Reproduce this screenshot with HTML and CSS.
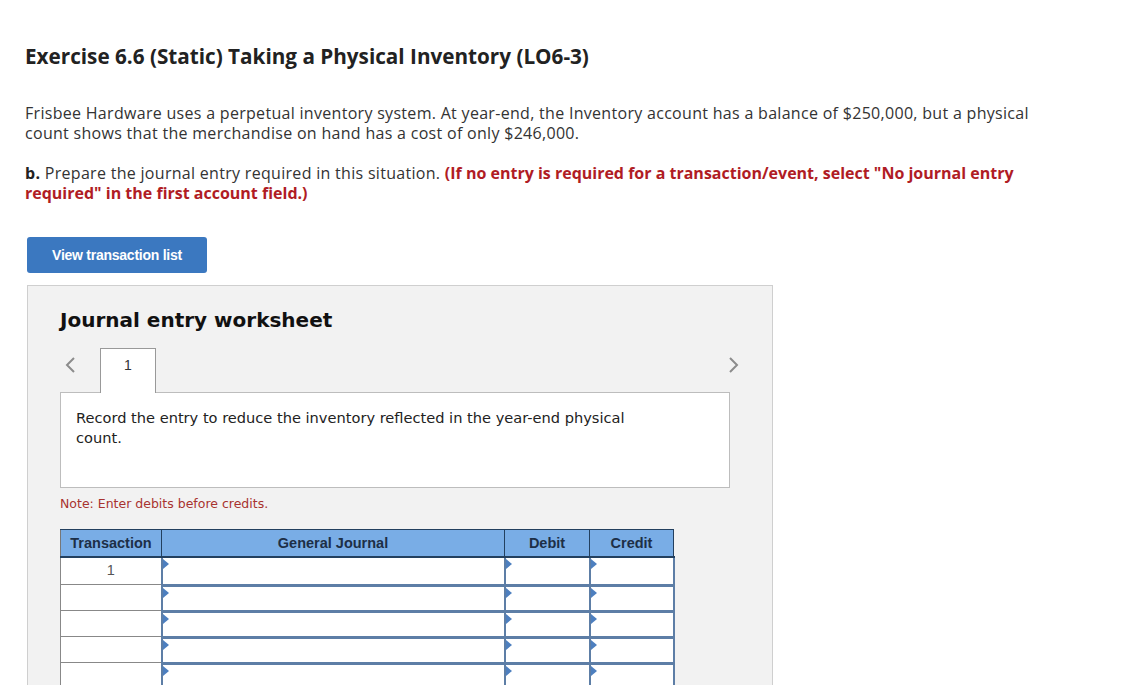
FILE: index.html
```html
<!DOCTYPE html>
<html>
<head>
<meta charset="utf-8">
<link rel="stylesheet" href="styles.css">
</head>
<body>
<div class="page">
  <h1 class="title">Exercise 6.6 (Static) Taking a Physical Inventory (LO6-3)</h1>
  <p class="intro">Frisbee Hardware uses a perpetual inventory system. At year-end, the Inventory account has a balance of $250,000, but a physical count shows that the merchandise on hand has a cost of only $246,000.</p>
  <p class="task"><b>b.</b> Prepare the journal entry required in this situation. <span class="warn">(If no entry is required for a transaction/event, select "No journal entry required" in the first account field.)</span></p>
  <button class="btn">View transaction list</button>
  <div class="panel">
    <h2 class="ws-title">Journal entry worksheet</h2>
    <div class="tabs">
      <span class="arrow">
        <svg width="12" height="18" viewBox="0 0 12 18"><path d="M10 2 L3 9 L10 16" fill="none" stroke="#8c8c8c" stroke-width="2"/></svg>
      </span>
      <div class="tab">1</div>
      <span class="spacer"></span>
      <span class="arrow right">
        <svg width="12" height="18" viewBox="0 0 12 18"><path d="M2 2 L9 9 L2 16" fill="none" stroke="#8c8c8c" stroke-width="2"/></svg>
      </span>
    </div>
    <div class="content">Record the entry to reduce the inventory reflected in the year-end physical count.</div>
    <p class="note">Note: Enter debits before credits.</p>
    <table class="journal">
      <colgroup><col class="c-tr"><col class="c-gj"><col class="c-dr"><col class="c-cr"></colgroup>
      <thead>
        <tr><th>Transaction</th><th>General Journal</th><th>Debit</th><th>Credit</th></tr>
      </thead>
      <tbody>
        <tr class="first"><td class="tr">1</td><td class="in"><div class="cell"></div></td><td class="in"><div class="cell"></div></td><td class="in"><div class="cell"></div></td></tr>
        <tr><td class="tr"></td><td class="in"><div class="cell"></div></td><td class="in"><div class="cell"></div></td><td class="in"><div class="cell"></div></td></tr>
        <tr><td class="tr"></td><td class="in"><div class="cell"></div></td><td class="in"><div class="cell"></div></td><td class="in"><div class="cell"></div></td></tr>
        <tr><td class="tr"></td><td class="in"><div class="cell"></div></td><td class="in"><div class="cell"></div></td><td class="in"><div class="cell"></div></td></tr>
        <tr><td class="tr"></td><td class="in"><div class="cell"></div></td><td class="in"><div class="cell"></div></td><td class="in"><div class="cell"></div></td></tr>
      </tbody>
    </table>
  </div>
</div>
</body>
</html>
```
FILE: styles.css
```css
html, body { margin: 0; padding: 0; background: #fff; }
body { font-family: "Open Sans", "Lato", sans-serif; color: #333; overflow: hidden; height: 685px; }
.page { padding: 0 0 0 25px; }
.title { margin: 0; padding-top: 43px; font-size: 20.7px; font-weight: 700; color: #222; line-height: 26px; }
.intro { margin: 34px 0 0; font-size: 16px; line-height: 20px; width: 1040px; color: #333; letter-spacing: 0.3px; }
.task { margin: 20px 0 0; font-size: 16px; line-height: 20px; width: 1040px; color: #333; letter-spacing: 0.3px; }
.task b { color: #222; }
.warn { color: #b01c24; font-weight: 700; letter-spacing: 0; }
.btn { display: block; margin: 34px 0 0 2px; width: 180px; height: 36px; border: 0; border-radius: 3px; background: #3b78c0; color: #fff; font-family: "Liberation Sans", Arial, sans-serif; font-weight: 700; font-size: 14px; letter-spacing: -0.25px; padding: 0; }
.panel { margin: 12px 0 0 2px; width: 712px; height: 420px; background: #f2f2f2; border: 1px solid #cfcfcf; padding: 0 0 0 32px; }
.ws-title { margin: 22px 0 0; font-family: "DejaVu Sans", Verdana, sans-serif; font-size: 20px; font-weight: 700; color: #111; line-height: 24px; }
.tabs { display: flex; align-items: stretch; margin-top: 16px; width: 680px; height: 45px; }
.arrow { width: 40px; display: flex; align-items: flex-start; padding-left: 4px; padding-top: 8px; box-sizing: border-box; }
.arrow.right { justify-content: flex-end; }
.tab { width: 56px; height: 45px; box-sizing: border-box; background: #fff; border: 1px solid #999; border-bottom: 0; font-family: "Liberation Sans", Arial, sans-serif; font-size: 14px; color: #333; text-align: center; line-height: 32px; position: relative; z-index: 1; }
.spacer { flex: 1; }
.content { width: 670px; height: 96px; box-sizing: border-box; background: #fff; border: 1px solid #bdbdbd; margin-top: -1px; padding: 15px 90px 15px 15px; font-family: "DejaVu Sans", Verdana, sans-serif; font-size: 14.6px; line-height: 20px; color: #222; }
.note { margin: 8px 0 0; font-family: "DejaVu Sans", Verdana, sans-serif; font-size: 12.5px; color: #a8332f; line-height: 16px; }
.journal { margin-top: 17px; border-collapse: collapse; table-layout: fixed; width: 613px; font-family: "Liberation Sans", Arial, sans-serif; font-size: 14.5px; }
.c-tr { width: 101px; }
.c-gj { width: 343px; }
.c-dr { width: 85px; }
.c-cr { width: 84px; }
.journal th { background: #79ade6; height: 26px; padding: 0; border: 1px solid #23405f; border-bottom: 2px solid #23405f; font-weight: 700; color: #1d2f47; }
.journal th:first-child { border-left-color: #777; }
.journal td { padding: 0; height: 26px; box-sizing: border-box; }
.journal td.tr { border: 1px solid #888; border-top: 0; text-align: center; color: #555; vertical-align: top; line-height: 24px; background: #fff; }
.journal td.in { border-left: 2px solid #5d7ea6; border-right: 2px solid #5d7ea6; vertical-align: top; background: #fff; }
.cell { height: 26px; box-sizing: border-box; border-top: 3px solid #5d7ea6; position: relative; background: #fff; }
.journal tr.first .cell { border-top: 0; }
.cell::before { content: ""; position: absolute; left: 0; top: 1px; border-left: 6px solid #4d7fbf; border-top: 5px solid transparent; border-bottom: 5px solid transparent; }
```
